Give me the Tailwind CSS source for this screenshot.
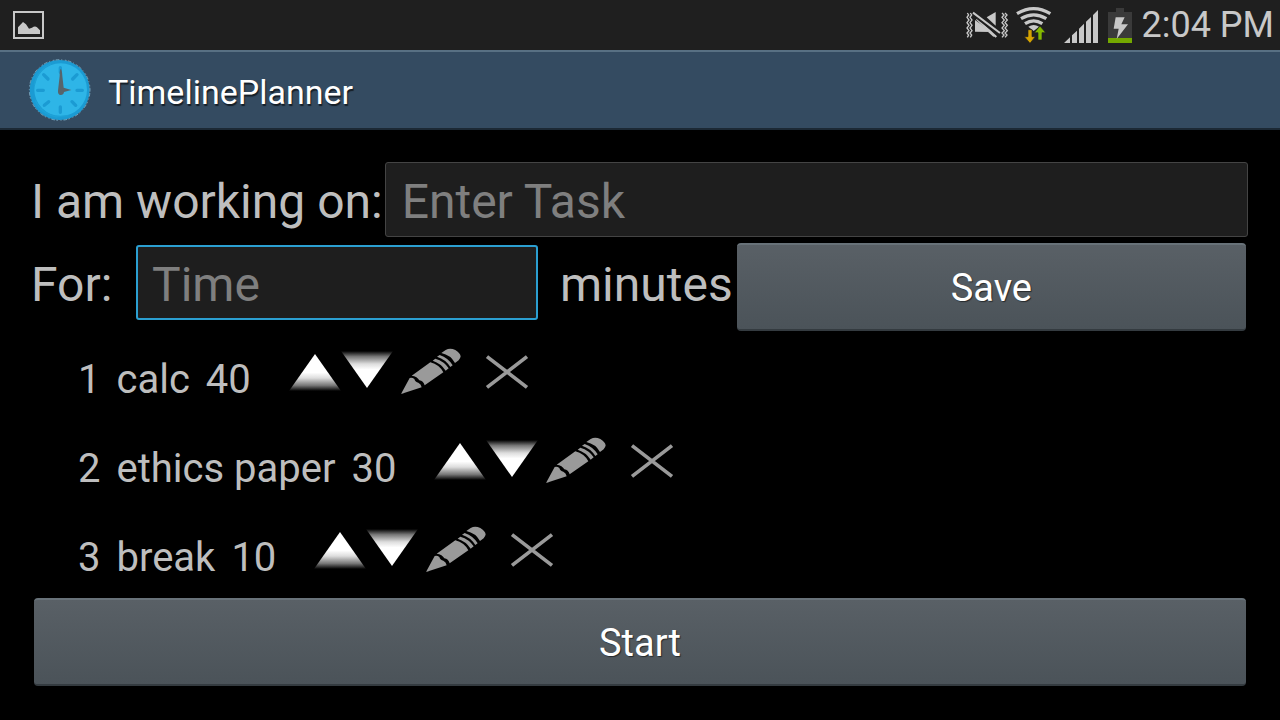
<!DOCTYPE html>
<html lang="en">
<head>
<meta charset="utf-8">
<meta name="viewport" content="width=device-width, initial-scale=1">
<title>TimelinePlanner</title>
<script src="https://cdn.jsdelivr.net/npm/@tailwindcss/browser@4"></script>
</head>
<body class="min-h-screen bg-black font-['Roboto','Noto_Sans',sans-serif] text-[#bebebe]">

<!-- Shared icon shapes for the task rows -->
<svg class="absolute size-0" aria-hidden="true">
  <defs>
    <linearGradient id="fadeUp" gradientUnits="userSpaceOnUse" x1="0" y1="42" x2="0" y2="153">
      <stop offset="0.5" stop-color="#fff"/><stop offset="0.65" stop-color="#ddd"/><stop offset="0.85" stop-color="#777"/><stop offset="1" stop-color="#000"/>
    </linearGradient>
    <linearGradient id="fadeDown" gradientUnits="userSpaceOnUse" x1="0" y1="144" x2="0" y2="33">
      <stop offset="0.5" stop-color="#fff"/><stop offset="0.65" stop-color="#ddd"/><stop offset="0.85" stop-color="#777"/><stop offset="1" stop-color="#000"/>
    </linearGradient>
  </defs>
  <symbol id="up" viewBox="24 0 156 180"><path d="M102 42 L180 153 H24Z" fill="url(#fadeUp)"/></symbol>
  <symbol id="down" viewBox="180 0 156 180"><path d="M258 144 L336 33 H180Z" fill="url(#fadeDown)"/></symbol>
  <symbol id="pencil" viewBox="336 0 228 180">
    <g fill="#9a9a9a">
      <path d="M360 162 L386 114 Q394 112 400 117 Q403 127 412 128 Q420 132 422 142Z"/>
      <path d="M392 107 L448 67 Q475 74 487 97 L431 136 Q427 122 415 121 Q409 109 392 107Z"/>
      <path d="M455 62 L463 56 Q490 64 503 85 L494 92 Q480 70 455 62Z"/>
      <path d="M468 50 L476 45 Q502 54 515 76 L508 81 Q494 58 468 50Z"/>
      <path d="M481 39 L494 30 Q507 22 523 30 Q537 38 539 49 Q538 56 533 61 L522 69 Q509 45 481 39Z"/>
    </g>
  </symbol>
  <symbol id="remove" viewBox="564 0 228 180"><path d="M618 50 L738 142 M738 50 L618 142" stroke="#9a9a9a" stroke-width="11" fill="none"/></symbol>
</svg>

<div class="flex h-[50px] items-center bg-[#1f1f1f] pr-[6px] pl-[13px] text-[#c8c8c8]">
  <svg class="h-[30px] w-[31px]" viewBox="0 0 93 90" role="img" aria-label="Screenshot saved"><path d="M3 6H90V84H3Z" fill="none" stroke="currentColor" stroke-width="6"/><path d="M15 72V52L30 36L39 43L48 56L57 53Q66 47 72 52L81 61V72Z" fill="currentColor"/></svg>
  <svg class="ml-auto h-[50px] w-[174px]" viewBox="45 0 522 150" role="img" aria-label="Vibrate, Wi-Fi, signal, charging">
    <g fill="none" stroke="#c8c8c8" stroke-width="4">
      <path d="M52 39L56 45L51 52L57 60L51 68L57 76L51 84L57 92L51 99L56 105L52 112"/>
      <path d="M61 39L65 45L60 52L66 60L60 68L66 76L60 84L66 92L60 99L65 105L61 112"/>
      <path d="M156 39L162 45L156 52L163 60L156 68L163 76L156 84L163 92L156 99L162 105L156 112"/>
      <path d="M165 39L171 45L165 52L172 60L165 68L172 76L165 84L172 92L165 99L171 105L165 112"/>
    </g>
    <path d="M110 52L137 36V77Z" fill="#c8c8c8"/>
    <path d="M75 60L118 90L124 96L75 95V60ZM75 95L105 84L138 108L130 110L105 88Z" fill="#c8c8c8"/>
    <path d="M69 38L150 99M80 57L139 111" stroke="#c8c8c8" stroke-width="6"/>
    <path d="M76 52L144 104" stroke="#1f1f1f" stroke-width="4"/>
    <g fill="none" stroke="#c8c8c8" stroke-width="10">
      <path d="M201 41Q251 11 301 41"/><path d="M213 56Q251 33 289 56"/><path d="M225 71Q251 54 277 71"/>
    </g>
    <path d="M235 80Q251 70 267 80L251 93Z" fill="#c8c8c8"/>
    <path d="M234 89H246V110H256L240 130L223 110H234Z" fill="#d5a300" stroke="#1f1f1f" stroke-width="2"/>
    <path d="M270 78L287 98H276V120H264V98H253Z" fill="#84b800" stroke="#1f1f1f" stroke-width="2"/>
    <path d="M342 129L360 112V129ZM366 106L381 92V129H366ZM387 86L402 71V129H387ZM408 65L423 51V129H408ZM429 45L444 30V129H429Z" fill="#c8c8c8"/>
    <path d="M474 36H498V24H522V36H546V114H474Z" fill="#3a3a3a"/>
    <path d="M474 114H546V129H474Z" fill="#74a800"/>
    <path d="M497 52H524L514 73H534L500 117L506 86H491Z" fill="#c8c8c8"/>
  </svg>
  <time class="ml-[3px] text-[36px] leading-[50px] whitespace-nowrap">2:04 PM</time>
</div>

<header class="flex h-20 items-center border-t-2 border-b-2 border-t-[#587083] border-b-[#1c2935] bg-[#344b61] pl-7">
  <svg class="h-[66px] w-16" viewBox="24 21 192 198" aria-hidden="true">
    <circle cx="119" cy="120" r="90" fill="#1b9bd3"/>
    <circle cx="119" cy="120" r="91" fill="none" stroke="#8fc4df" stroke-width="2" stroke-dasharray="5 4 11 6 3 8"/>
    <circle cx="122" cy="119" r="79" fill="#2eb5e7"/>
    <path d="M46 152Q66 193 112 202M43 105Q53 57 93 42M61 176Q91 207 145 197" fill="none" stroke="#1ea2d7" stroke-width="4"/>
    <path d="M121 53V67M121 171V187M53 121H70M171 121H187M71 74L84 87M171 74L158 87M73 166L86 155M167 166L156 155" stroke="#1b9bd3" stroke-width="10" stroke-linecap="round"/>
    <path d="M122 57Q126 58 127 78L131 113L154 120L132 126Q131 135 122 135Q113 134 114 122L119 78Q119 58 122 57Z" fill="#57646b"/>
  </svg>
  <h1 class="ml-4 pt-1 text-[34px] leading-[48px] text-white [text-shadow:1px_2px_1px_#0009]">TimelinePlanner</h1>
</header>

<main class="px-8 pt-8 text-[48px] leading-[56px]">
  <form onsubmit="return false">
    <div class="flex items-center">
      <label for="task" class="-ml-px pt-1 pr-[2px] whitespace-nowrap">I am working on:</label>
      <input id="task" type="text" placeholder="Enter Task" class="h-[75px] min-w-0 flex-1 rounded-[3px] border border-[#444] bg-[#1e1e1e] px-4 pt-1 outline-none placeholder:text-[#7f7f7f]">
    </div>
    <div class="mt-[6px] flex items-start pr-[2px]">
      <label for="time" class="-ml-px w-[105px] shrink-0 pt-[14px]">For:</label>
      <input id="time" type="text" inputmode="numeric" placeholder="Time" class="mt-[2px] h-[75px] w-[402px] min-w-0 rounded-[3px] border-2 border-[#2b9fd1] bg-[#1e1e1e] px-[14px] pt-1 outline-none placeholder:text-[#7f7f7f]">
      <span class="ml-[22px] pt-[14px] pr-1">minutes</span>
      <button type="submit" class="h-[88px] flex-1 rounded-[4px] border-t-2 border-b-2 border-t-[#687279] border-b-[#343b40] bg-linear-to-b from-[#596066] to-[#4b5359] pt-[2px] text-[38px] text-white [text-shadow:1px_1px_1px_#0008]">Save</button>
    </div>
  </form>

  <ol class="pl-[46px] text-[40px] leading-[48px]">
    <li class="flex h-[89px] items-start gap-4 whitespace-nowrap pt-[9px]">
      <span class="mt-4">1</span><span class="mt-4">calc</span><span class="mt-4">40</span>
      <span class="ml-[22px] flex">
        <button type="button" aria-label="Move calc up"><svg class="h-[60px] w-[52px]"><use href="#up"/></svg></button>
        <button type="button" aria-label="Move calc down"><svg class="h-[60px] w-[52px]"><use href="#down"/></svg></button>
        <button type="button" aria-label="Edit calc"><svg class="h-[60px] w-[76px]"><use href="#pencil"/></svg></button>
        <button type="button" aria-label="Delete calc"><svg class="h-[60px] w-[76px]"><use href="#remove"/></svg></button>
      </span>
    </li>
    <li class="flex h-[89px] items-start gap-4 whitespace-nowrap pt-[9px]">
      <span class="mt-4">2</span><span class="mt-4">ethics paper</span><span class="mt-4">30</span>
      <span class="ml-[22px] flex">
        <button type="button" aria-label="Move ethics paper up"><svg class="h-[60px] w-[52px]"><use href="#up"/></svg></button>
        <button type="button" aria-label="Move ethics paper down"><svg class="h-[60px] w-[52px]"><use href="#down"/></svg></button>
        <button type="button" aria-label="Edit ethics paper"><svg class="h-[60px] w-[76px]"><use href="#pencil"/></svg></button>
        <button type="button" aria-label="Delete ethics paper"><svg class="h-[60px] w-[76px]"><use href="#remove"/></svg></button>
      </span>
    </li>
    <li class="flex h-[89px] items-start gap-4 whitespace-nowrap pt-[9px]">
      <span class="mt-4">3</span><span class="mt-4">break</span><span class="mt-4">10</span>
      <span class="ml-[22px] flex">
        <button type="button" aria-label="Move break up"><svg class="h-[60px] w-[52px]"><use href="#up"/></svg></button>
        <button type="button" aria-label="Move break down"><svg class="h-[60px] w-[52px]"><use href="#down"/></svg></button>
        <button type="button" aria-label="Edit break"><svg class="h-[60px] w-[76px]"><use href="#pencil"/></svg></button>
        <button type="button" aria-label="Delete break"><svg class="h-[60px] w-[76px]"><use href="#remove"/></svg></button>
      </span>
    </li>
  </ol>

  <div class="px-[2px]">
    <button type="button" class="block h-[88px] w-full rounded-[4px] border-t-2 border-b-2 border-t-[#687279] border-b-[#343b40] bg-linear-to-b from-[#596066] to-[#4b5359] pt-[2px] text-[38px] text-white [text-shadow:1px_1px_1px_#0008]">Start</button>
  </div>
</main>
</body>
</html>
